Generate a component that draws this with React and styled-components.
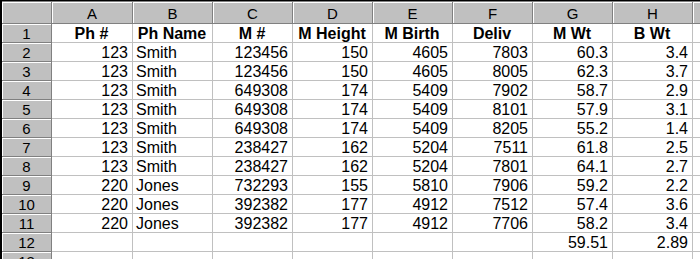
import styled, { createGlobalStyle } from "styled-components";

const GlobalStyle = createGlobalStyle`
    html, body {
        margin: 0;
        padding: 0;
        background: #fff;
        overflow: hidden;
    }
    body {
        font-family: "Liberation Sans", Arial, sans-serif;
    }
`;

const columns = ["A", "B", "C", "D", "E", "F", "G", "H", ""];

const titles = ["Ph #", "Ph Name", "M #", "M Height", "M Birth", "Deliv", "M Wt", "B Wt"];

const rows = [
    [123, "Smith", 123456, 150, 4605, 7803, "60.3", "3.4"],
    [123, "Smith", 123456, 150, 4605, 8005, "62.3", "3.7"],
    [123, "Smith", 649308, 174, 5409, 7902, "58.7", "2.9"],
    [123, "Smith", 649308, 174, 5409, 8101, "57.9", "3.1"],
    [123, "Smith", 649308, 174, 5409, 8205, "55.2", "1.4"],
    [123, "Smith", 238427, 162, 5204, 7511, "61.8", "2.5"],
    [123, "Smith", 238427, 162, 5204, 7801, "64.1", "2.7"],
    [220, "Jones", 732293, 155, 5810, 7906, "59.2", "2.2"],
    [220, "Jones", 392382, 177, 4912, 7512, "57.4", "3.6"],
    [220, "Jones", 392382, 177, 4912, 7706, "58.2", "3.4"],
    ["", "", "", "", "", "", "59.51", "2.89"],
    ["", "", "", "", "", "", "", ""],
];

export default function App() {
    return (
        <>
            <GlobalStyle />
            <Frame>
                <Sheet>
                    <Corner />
                    {columns.map((c, i) => (
                        <ColHead key={"h" + i}>{c}</ColHead>
                    ))}

                    <RowHead>1</RowHead>
                    {titles.map((t) => (
                        <Cell key={t} $align="center" $bold>{t}</Cell>
                    ))}
                    <Cell />

                    {rows.map((r, i) => (
                        <Row key={i} num={i + 2} data={r} />
                    ))}
                </Sheet>
            </Frame>
        </>
    );
}

const Row = ({ num, data }) => (
    <>
        <RowHead>{num}</RowHead>
        {data.map((v, j) => (
            <Cell key={j} $align={typeof v === "string" && isNaN(Number(v)) ? "left" : "right"}>
                {v}
            </Cell>
        ))}
        <Cell />
    </>
);

const Frame = styled.div`
    width: 700px;
    height: 259px;
    overflow: hidden;
    border-top: 1px solid #000;
    border-left: 2px solid #000;
    box-sizing: border-box;
`;

const Sheet = styled.div`
    display: grid;
    grid-template-columns: 50px 81px repeat(7, 80px) 40px;
    grid-template-rows: 22px;
    grid-auto-rows: 19px;
    border-top: 1px solid #808080;
`;

const headBase = `
    box-sizing: border-box;
    background: #c0c0c0;
    border-right: 1px solid #808080;
    border-bottom: 1px solid #808080;
    box-shadow: inset 1px 1px 0 #fff;
    color: #000;
    font-size: 15px;
    display: flex;
    align-items: center;
    justify-content: center;
    overflow: hidden;
`;

const Corner = styled.div`
    ${headBase}
`;

const ColHead = styled.div`
    ${headBase}
    padding-top: 1px;
`;

const RowHead = styled.div`
    ${headBase}
    padding-top: 1px;
`;

const Cell = styled.div`
    box-sizing: border-box;
    border-right: 1px solid #c0c0c0;
    border-bottom: 1px solid #c0c0c0;
    font-size: 16px;
    font-weight: ${(p) => (p.$bold ? "bold" : "normal")};
    color: #000;
    white-space: nowrap;
    overflow: hidden;
    display: flex;
    align-items: center;
    padding: 1px 4px 0 3px;
    justify-content: ${(p) =>
        p.$align === "center" ? "center" : p.$align === "right" ? "flex-end" : "flex-start"};
`;
